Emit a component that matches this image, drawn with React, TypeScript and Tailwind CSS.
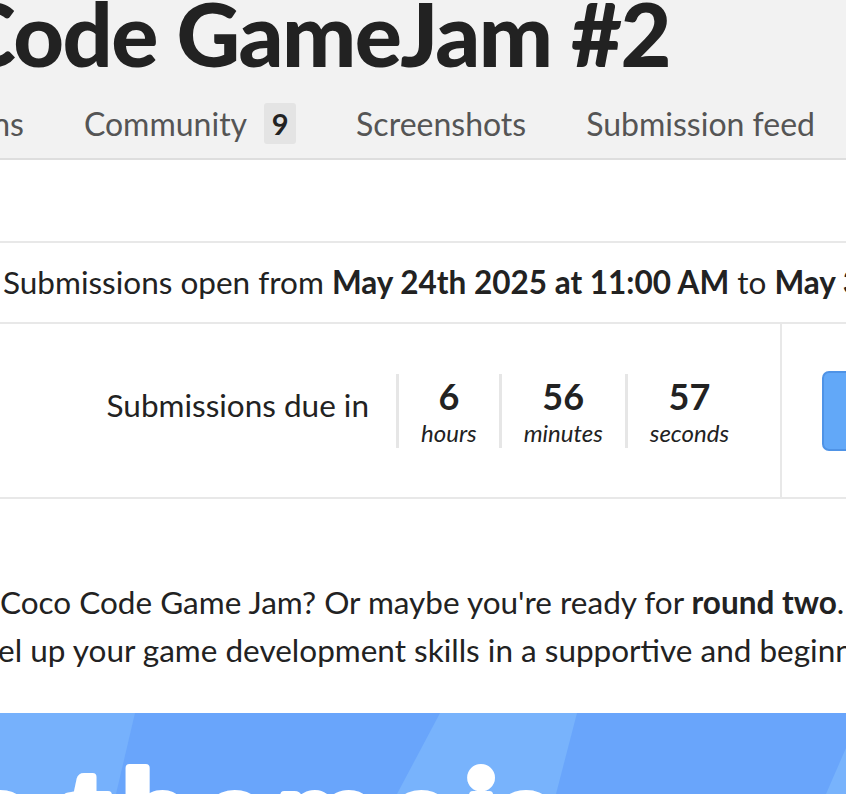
export default function App() {
  return (
    <div className="w-[846px] h-[794px] overflow-hidden bg-white text-[#222] font-[family-name:Lato,'Noto_Sans',sans-serif]">
      {/* Header */}
      <div className="bg-[#f2f2f2] border-b-2 border-[#dedede] pb-[14px]">
        <div className="flex justify-end pr-[176px]">
          <h1 className="shrink-0 whitespace-nowrap text-[88px] leading-[66px] font-black tracking-[-1.5px] text-[#222]">
            Coco Code GameJam #2
          </h1>
        </div>
        <nav className="mt-[37px] flex justify-end gap-[60px] pr-[31px] text-[32px] leading-[41px] text-[#555] whitespace-nowrap">
          <span className="shrink-0">Overview</span>
          <span className="shrink-0">Submissions</span>
          <span className="shrink-0 flex gap-[17px]">
            <span>Community</span>
            <span className="bg-[#e4e4e4] rounded-[3px] w-[32px] h-[41px] text-center text-[29px] font-bold text-[#222]">9</span>
          </span>
          <span className="shrink-0">Screenshots</span>
          <span className="shrink-0">Submission feed</span>
        </nav>
      </div>

      <div className="h-[81px]" />

      {/* Dates */}
      <div className="border-t-2 border-b-2 border-[#e8e8e8] pt-[18px] pb-[19px] pl-[3px] text-[31.5px] leading-[42px] whitespace-nowrap">
        Submissions open from <strong className="font-bold">May 24th 2025 at 11:00 AM</strong> to{" "}
        <strong className="font-bold">May 31st 2025 at 11:00 AM</strong>
      </div>

      {/* Countdown */}
      <div className="flex h-[175px] border-b-2 border-[#e8e8e8]">
        <div className="w-[782px] shrink-0 border-r-2 border-[#e8e8e8] flex justify-end items-center pr-[29px]">
          <div className="text-[31.5px] leading-[38px] pr-[27px] pb-[12px] whitespace-nowrap">Submissions due in</div>
          {[
            ["6", "hours"],
            ["56", "minutes"],
            ["57", "seconds"],
          ].map(([n, l]) => (
            <div key={l} className="border-l-[3px] border-[#e6e6e6] px-[22px] flex flex-col items-center">
              <div className="text-[36px] leading-[44px] font-bold">{n}</div>
              <div className="text-[24px] leading-[30px] italic">{l}</div>
            </div>
          ))}
        </div>
        <div className="flex items-center pl-[40px] shrink-0">
          <div className="w-[220px] h-[80px] rounded-[7px] bg-[#62a8f8] border-2 border-[#4f93e6] flex items-center pl-[40px] text-white text-[31px] font-bold whitespace-nowrap">
            Submit your project
          </div>
        </div>
      </div>

      {/* Paragraph */}
      <div className="mt-[79px] text-[31.5px] leading-[48px] whitespace-nowrap">
        <div>
          Coco Code Game Jam? Or maybe you're ready for <strong className="font-bold">round two</strong>. Join us again!
        </div>
        <div className="ml-[-49px]">Level up your game development skills in a supportive and beginner-friendly space.</div>
      </div>

      {/* Banner */}
      <div className="mt-[39px] h-[81px] bg-[#69a5fb] overflow-hidden">
        <svg width="846" height="81" viewBox="0 0 846 81" className="block">
          <rect width="846" height="81" fill="#69a5fb" />
          <polygon points="0,0 135,0 116,81 0,81" fill="#76b1fc" />
          <polygon points="440,0 577,0 556,81 397,81" fill="#78b3fc" />
          <polygon points="846,35 846,81 826,81" fill="#78b3fc" />
          <g
            fill="#ffffff"
            stroke="#ffffff"
            strokeWidth="8"
            strokeLinejoin="round"
            fontFamily="Lato, sans-serif"
            fontWeight="900"
            fontSize="116"
          >
            <text x="-150" y="142" textLength="180" lengthAdjust="spacing">The</text>
            <text x="66" y="142" textLength="385" lengthAdjust="spacing">theme</text>
            <text x="466" y="142" textLength="84" lengthAdjust="spacing">is</text>
          </g>
        </svg>
      </div>
    </div>
  );
}
